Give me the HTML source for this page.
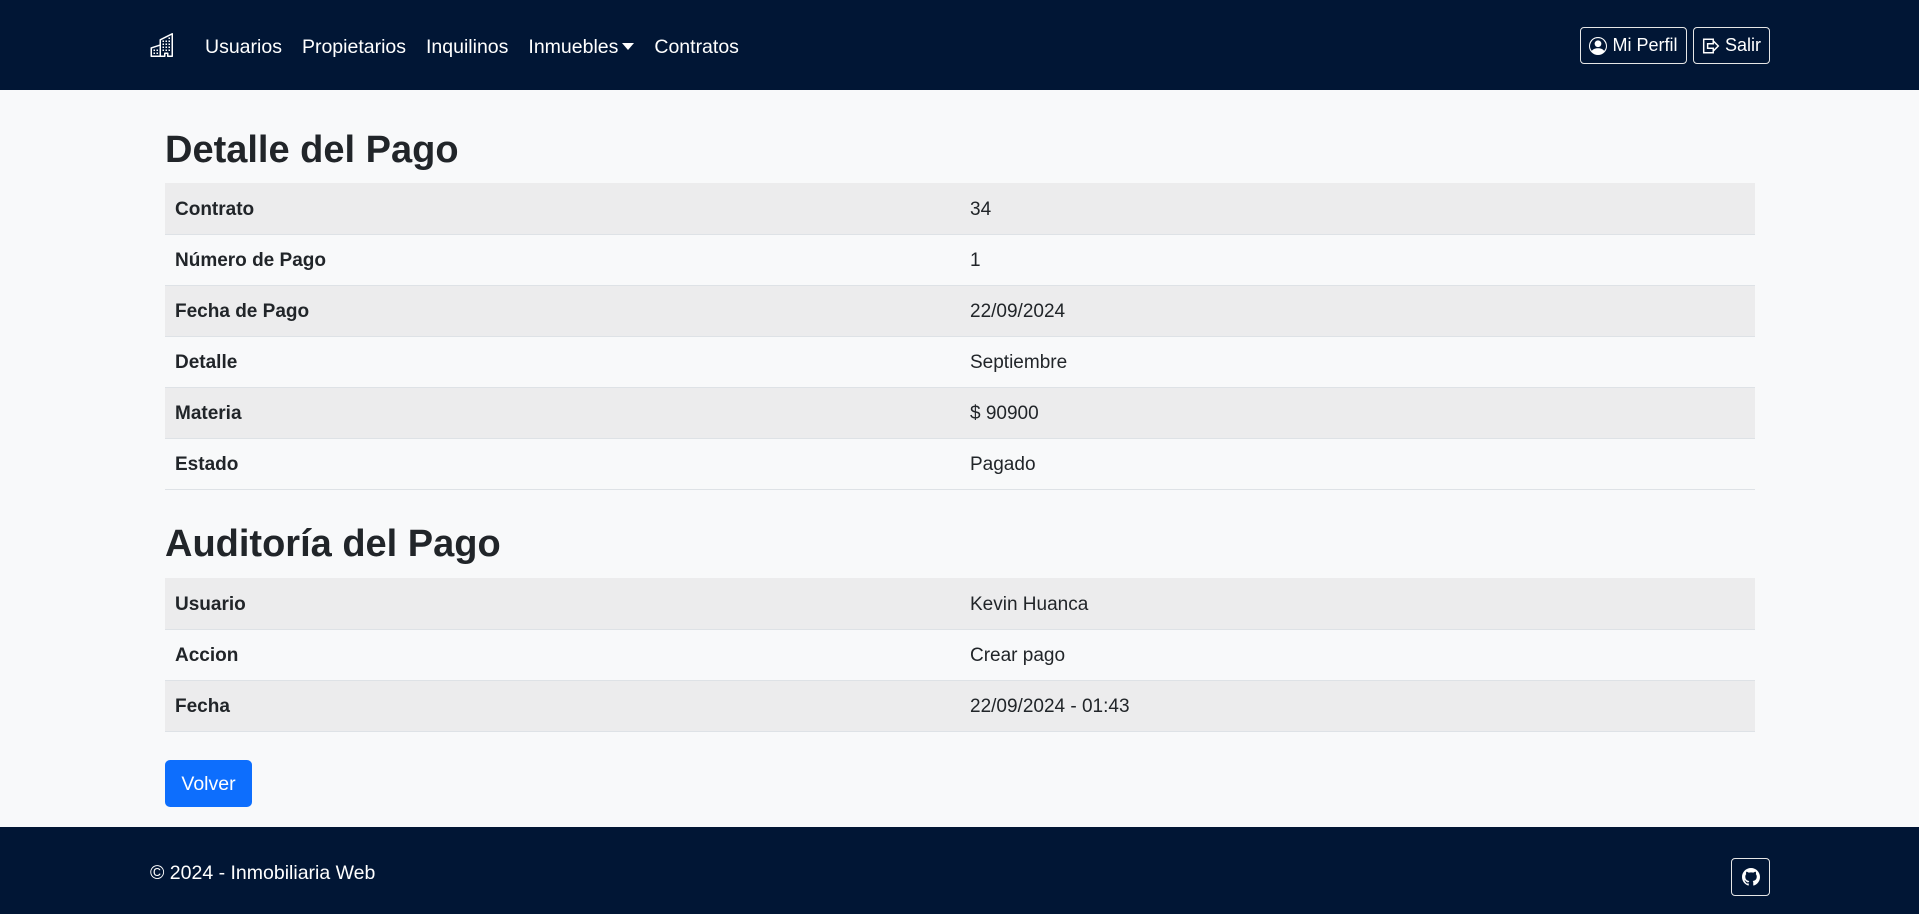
<!DOCTYPE html>
<html><head><meta charset="utf-8"><style>
*{box-sizing:border-box;margin:0;padding:0}
body{width:1919px;height:914px;background:#f8f9fa;font-family:"Liberation Sans",sans-serif;color:#212529;font-size:19px;position:relative;overflow:hidden}
nav{position:absolute;left:0;top:0;width:1919px;height:90px;background:#011635;color:#fff}
.logo{position:absolute;left:150px;top:33px}
.links{position:absolute;left:205px;top:2px;height:90px;display:flex;align-items:center;gap:20px;font-size:19.5px}
.caret{display:inline-block;border-left:6px solid transparent;border-right:6px solid transparent;border-top:7px solid #fff;margin-left:4px;vertical-align:3px}
.btn{position:absolute;border:1px solid #e6e6e6;border-radius:4px;color:#fff;font-size:18px;display:flex;align-items:center;justify-content:center;gap:5px}
h2{position:absolute;left:165px;font-size:38px;font-weight:bold}
table{position:absolute;left:165px;width:1590px;border-collapse:collapse}
td{height:51px;padding:3px 10px 0;border-bottom:1px solid #dee2e6;width:50%;font-size:19px}
td:first-child{font-weight:bold}
tr:nth-child(odd) td{background:#ececed}
.volver{position:absolute;left:165px;top:760px;width:87px;height:47px;background:#0d6efd;color:#fff;border-radius:5px;display:flex;align-items:center;justify-content:center;font-size:19.5px;padding-top:2px}
footer{position:absolute;left:0;top:827px;width:1919px;height:87px;background:#011635;color:#fff}
</style></head><body>
<nav>
<svg class="logo" width="25" height="24" viewBox="0 0 16 16" fill="#fff"><path d="M14.763.075A.5.5 0 0 1 15 .5v15a.5.5 0 0 1-.5.5h-3a.5.5 0 0 1-.5-.5V14h-1v1.5a.5.5 0 0 1-.5.5h-9a.5.5 0 0 1-.5-.5V10a.5.5 0 0 1 .342-.474L6 7.640V4.5a.5.5 0 0 1 .276-.447l8-4a.5.5 0 0 1 .487.022ZM6 8.694 1 10.360V15h5V8.694ZM7 15h2v-1.5a.5.5 0 0 1 .5-.5h2a.5.5 0 0 1 .5.5V15h2V1.309l-7 3.500V15Z"/><path d="M2 11h1v1H2v-1Zm2 0h1v1H4v-1Zm-2 2h1v1H2v-1Zm2 0h1v1H4v-1Zm4-4h1v1H8V9Zm2 0h1v1h-1V9Zm-2 2h1v1H8v-1Zm2 0h1v1h-1v-1Zm2-2h1v1h-1V9Zm0 2h1v1h-1v-1ZM8 7h1v1H8V7Zm2 0h1v1h-1V7Zm2 0h1v1h-1V7ZM8 5h1v1H8V5Zm2 0h1v1h-1V5Zm2 0h1v1h-1V5Zm0-2h1v1h-1V3Z"/></svg>
<div class="links"><span>Usuarios</span><span>Propietarios</span><span>Inquilinos</span><span>Inmuebles<span class="caret"></span></span><span>Contratos</span></div>
<div class="btn" style="left:1580px;top:27px;width:107px;height:37px"><svg width="18" height="18" viewBox="0 0 16 16" fill="#fff"><path d="M11 6a3 3 0 1 1-6 0 3 3 0 0 1 6 0z"/><path fill-rule="evenodd" d="M0 8a8 8 0 1 1 16 0A8 8 0 0 1 0 8zm8-7a7 7 0 0 0-5.468 11.370C3.242 11.226 4.805 10 8 10s4.757 1.225 5.468 2.370A7 7 0 0 0 8 1z"/></svg>Mi Perfil</div>
<div class="btn" style="left:1693px;top:27px;width:77px;height:37px"><svg width="18" height="18" viewBox="0 0 16 16" fill="none" stroke="#fff" stroke-width="1.3"><path d="M10 3V2H1.5v12H10v-1"/><path d="M5 6h5V3.5L14.5 8 10 12.5V10H5z"/></svg>Salir</div>
</nav>
<h2 style="top:129px">Detalle del Pago</h2>
<table style="top:183px">
<tr><td>Contrato</td><td>34</td></tr>
<tr><td>Número de Pago</td><td>1</td></tr>
<tr><td>Fecha de Pago</td><td>22/09/2024</td></tr>
<tr><td>Detalle</td><td>Septiembre</td></tr>
<tr><td>Materia</td><td>$ 90900</td></tr>
<tr><td>Estado</td><td>Pagado</td></tr>
</table>
<h2 style="top:523px">Auditoría del Pago</h2>
<table style="top:578px">
<tr><td>Usuario</td><td>Kevin Huanca</td></tr>
<tr><td>Accion</td><td>Crear pago</td></tr>
<tr><td>Fecha</td><td>22/09/2024 - 01:43</td></tr>
</table>
<div class="volver">Volver</div>
<footer>
<div style="position:absolute;left:150px;top:35px;font-size:19.5px">© 2024 - Inmobiliaria Web</div>
<div class="btn" style="left:1731px;top:31px;width:39px;height:38px"><svg width="18" height="18" viewBox="0 0 16 16" fill="#fff"><path d="M8 0C3.58 0 0 3.58 0 8c0 3.54 2.29 6.53 5.47 7.590.4.070.55-.170.55-.380 0-.190-.010-.820-.010-1.490-2.010.370-2.530-.490-2.690-.940-.090-.230-.480-.940-.820-1.130-.280-.150-.680-.520-.010-.530.630-.010 1.080.580 1.230.820.720 1.210 1.870.870 2.330.660.070-.520.280-.870.510-1.070-1.780-.200-3.640-.890-3.640-3.950 0-.870.310-1.590.820-2.150-.080-.200-.360-1.020.080-2.120 0 0 .670-.210 2.200.820.640-.180 1.320-.270 2-.270.680 0 1.360.090 2 .270 1.530-1.040 2.200-.820 2.200-.820.440 1.100.160 1.920.080 2.120.510.560.820 1.270.820 2.150 0 3.070-1.870 3.750-3.650 3.950.290.250.540.730.540 1.480 0 1.070-.010 1.930-.010 2.200 0 .210.150.460.550.380A8.010 8.010 0 0 0 16 8c0-4.420-3.580-8-8-8z"/></svg></div>
</footer>
</body></html>
